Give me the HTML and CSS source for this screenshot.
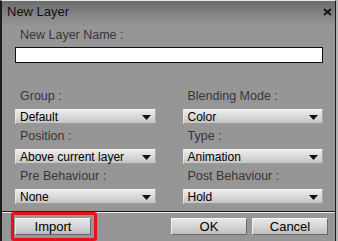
FILE: index.html
```html
<!DOCTYPE html>
<html lang="en">
<head>
  <meta charset="UTF-8" />
  <title>New Layer</title>
  <link rel="stylesheet" href="styles.css">
</head>
<body>
  <div class="dialog">
    <div class="titlebar">
      <span class="title">New Layer</span>
      <span class="close">
        <svg width="9" height="8" viewBox="0 0 9 8"><path d="M1 1 L8 7 M8 1 L1 7" stroke="#151515" stroke-width="2" fill="none"/></svg>
      </span>
    </div>
    <div class="content">
      <div class="label">New Layer Name :</div>
      <div class="textbox"></div>
      <div class="fields">
        <div class="field">
          <div class="label">Group :</div>
          <div class="select"><span>Default</span><svg class="arrow" width="9" height="5" viewBox="0 0 9 5"><polygon points="0,0 9,0 4.5,5" fill="#111"/></svg></div>
        </div>
        <div class="field">
          <div class="label">Blending Mode :</div>
          <div class="select"><span>Color</span><svg class="arrow" width="9" height="5" viewBox="0 0 9 5"><polygon points="0,0 9,0 4.5,5" fill="#111"/></svg></div>
        </div>
        <div class="field">
          <div class="label">Position :</div>
          <div class="select"><span>Above current layer</span><svg class="arrow" width="9" height="5" viewBox="0 0 9 5"><polygon points="0,0 9,0 4.5,5" fill="#111"/></svg></div>
        </div>
        <div class="field">
          <div class="label">Type :</div>
          <div class="select"><span>Animation</span><svg class="arrow" width="9" height="5" viewBox="0 0 9 5"><polygon points="0,0 9,0 4.5,5" fill="#111"/></svg></div>
        </div>
        <div class="field">
          <div class="label">Pre Behaviour :</div>
          <div class="select"><span>None</span><svg class="arrow" width="9" height="5" viewBox="0 0 9 5"><polygon points="0,0 9,0 4.5,5" fill="#111"/></svg></div>
        </div>
        <div class="field">
          <div class="label">Post Behaviour :</div>
          <div class="select"><span>Hold</span><svg class="arrow" width="9" height="5" viewBox="0 0 9 5"><polygon points="0,0 9,0 4.5,5" fill="#111"/></svg></div>
        </div>
      </div>
    </div>
    <div class="footer">
      <button class="btn import">Import</button>
      <div class="spacer"></div>
      <button class="btn">OK</button>
      <button class="btn">Cancel</button>
    </div>
  </div>
</body>
</html>
```

FILE: styles.css
```css
html, body {
  margin: 0;
  background: #b4b4b4;
}
body {
  font-family: 'Liberation Sans', Arial, sans-serif;
  width: 338px;
  height: 241px;
  overflow: hidden;
}
.dialog {
  width: 336px;
  height: 241px;
  box-sizing: border-box;
  background: #969696;
  border-top: 1px solid #e6e6e6;
  border-left: 2px solid #1c1c1c;
  border-right: 1px solid #1c1c1c;
  display: flex;
  flex-direction: column;
}
.titlebar {
  height: 24px;
  box-sizing: border-box;
  padding: 3px 3px 0 5px;
  background: linear-gradient(#6c6c6c, #8a8a8a 70%, #929292);
  display: flex;
  justify-content: space-between;
  align-items: flex-start;
}
.title {
  font-size: 13px;
  line-height: 15px;
  color: #111;
}
.close {
  margin-top: 4px;
  display: flex;
}
.content {
  flex: 1;
  padding: 3px 12px 0 13px;
}
.label {
  font-size: 12.5px;
  line-height: 14px;
  color: #363636;
  padding-left: 5px;
  white-space: nowrap;
}
.textbox {
  margin-top: 5px;
  height: 16px;
  box-sizing: border-box;
  background: #fff;
  border: 1px solid #111;
}
.fields {
  margin-top: 26px;
  display: grid;
  grid-template-columns: 1fr 1fr;
  column-gap: 27px;
  row-gap: 5px;
}
.field .select {
  margin-top: 6px;
}
.select {
  height: 15px;
  box-sizing: border-box;
  padding: 1px 4px 0 4px;
  font-size: 12px;
  line-height: 13px;
  color: #000;
  background: linear-gradient(#ebebeb, #d6d6d6 60%, #c4c4c4);
  border-top: 1px solid #f2f2f2;
  border-left: 1px solid #e8e8e8;
  border-bottom: 1px solid #9a9a9a;
  border-right: 1px solid #a8a8a8;
  display: flex;
  align-items: center;
  white-space: nowrap;
}
.select span {
  flex: 1;
}
.arrow {
  flex: none;
}
.footer {
  height: 30px;
  box-sizing: border-box;
  border-top: 1px solid #1a1a1a;
  box-shadow: inset 0 1px 0 #eeeeee;
  padding: 6px 7px 0 13px;
  display: flex;
  align-items: flex-start;
  gap: 5px;
}
.spacer {
  flex: 1;
}
.btn {
  width: 76px;
  height: 17px;
  padding: 0;
  margin: 0;
  box-sizing: border-box;
  font-family: 'Liberation Sans', Arial, sans-serif;
  font-size: 13px;
  line-height: 14px;
  color: #000;
  background: linear-gradient(#e6e6e6, #d2d2d2 60%, #bcbcbc);
  border-top: 1px solid #f4f4f4;
  border-left: 1px solid #eeeeee;
  border-bottom: 1px solid #6a6a6a;
  border-right: 1px solid #6a6a6a;
  border-radius: 0;
}
.import {
  position: relative;
}
.import::after {
  content: '';
  position: absolute;
  top: -7px;
  left: -5px;
  right: -7px;
  bottom: -7px;
  border: 3px solid #e8101a;
  border-radius: 3px;
  box-shadow: 0 0 1px #ff3030;
}
```
